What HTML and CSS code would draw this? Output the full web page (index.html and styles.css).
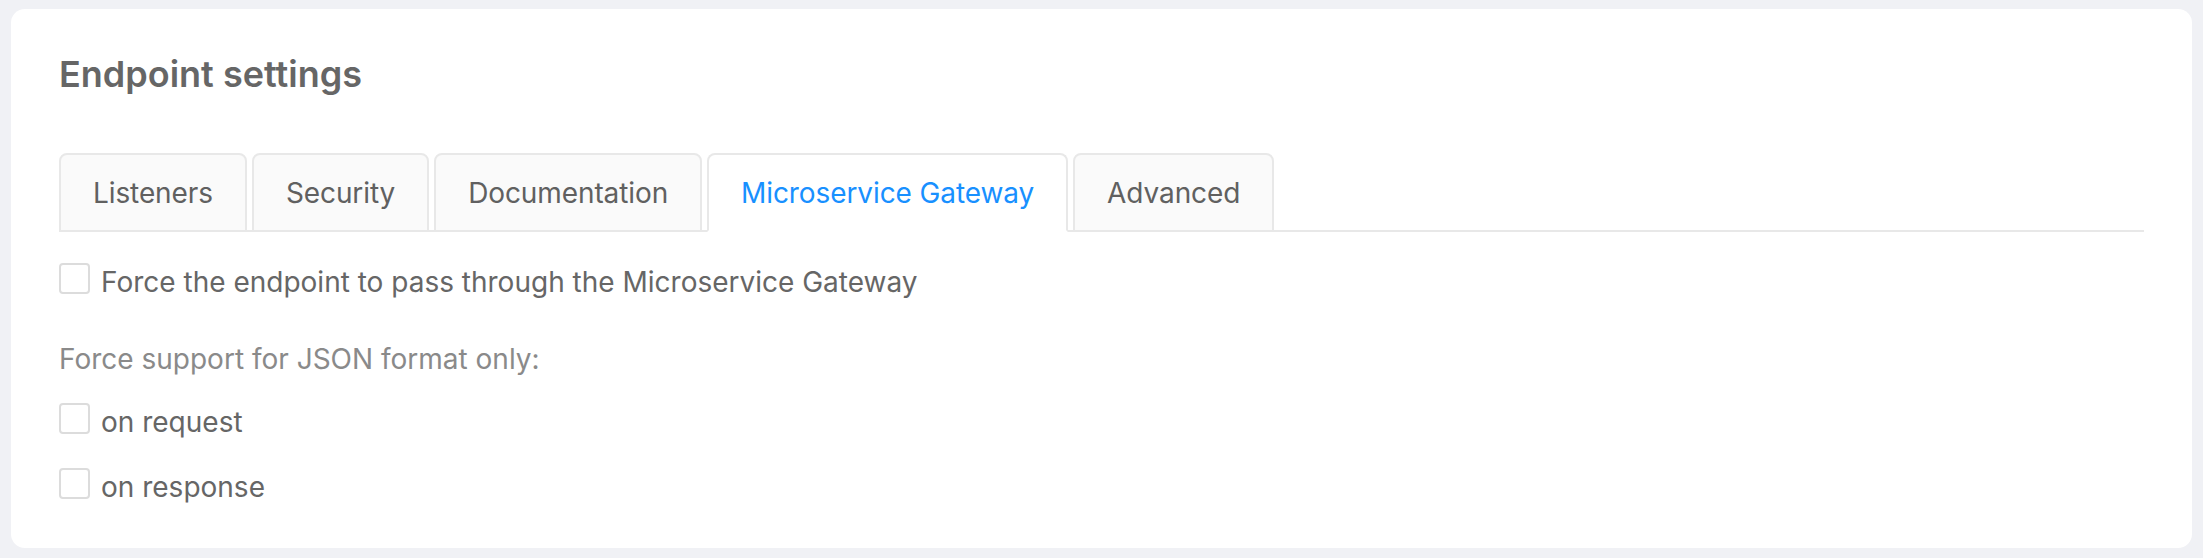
FILE: index.html
```html
<!DOCTYPE html>
<html lang="en">
<head>
<meta charset="utf-8">
<title>Endpoint settings</title>
<link rel="stylesheet" href="styles.css">
</head>
<body>
<div class="page">
  <section class="card">
    <h1 class="title">Endpoint settings</h1>
    <div class="tabs">
      <div class="tab">Listeners</div>
      <div class="tab">Security</div>
      <div class="tab">Documentation</div>
      <div class="tab tab-active">Microservice Gateway</div>
      <div class="tab">Advanced</div>
    </div>
    <div class="pane">
      <label class="check-row row-first">
        <span class="box"></span>
        <span class="check-label">Force the endpoint to pass through the Microservice Gateway</span>
      </label>
      <div class="group-label">Force support for JSON format only:</div>
      <label class="check-row row-second">
        <span class="box"></span>
        <span class="check-label">on request</span>
      </label>
      <label class="check-row row-third">
        <span class="box"></span>
        <span class="check-label">on response</span>
      </label>
    </div>
  </section>
</div>
</body>
</html>
```

FILE: styles.css
```css
* { box-sizing: border-box; }
html, body {
  margin: 0;
  padding: 0;
  background: #f0f1f5;
  font-family: Inter, "Noto Sans", "Liberation Sans", sans-serif;
}
.page {
  padding: 9px 11px 10px 11px;
}
.card {
  background: #ffffff;
  border-radius: 14px;
  padding: 44px 48px 41px 48px;
}
.title {
  margin: 0 0 58px 0;
  font-size: 36px;
  line-height: 42px;
  font-weight: 600;
  color: #666666;
}
.tabs {
  display: flex;
  gap: 5px;
  border-bottom: 2px solid #e8e8e8;
}
.tab {
  font-size: 28px;
  line-height: 34px;
  color: #606060;
  background: #fafafa;
  border: 2px solid #e8e8e8;
  border-radius: 8px 8px 0 0;
  padding: 21px 32px 20px 32px;
  margin-bottom: -2px;
  white-space: nowrap;
  letter-spacing: -0.1px;
}
.tab-active {
  background: #ffffff;
  color: #1890ff;
  border-bottom-color: #ffffff;
}
.pane {
  display: flex;
  flex-direction: column;
}
.check-row {
  display: flex;
  align-items: flex-start;
  gap: 10px;
  font-size: 28px;
  line-height: 40px;
  color: #666666;
}
.row-first { margin-top: 30px; }
.row-second { margin-top: 23px; }
.row-third { margin-top: 25px; }
.box {
  flex: 0 0 auto;
  width: 31px;
  height: 31px;
  margin-top: 1px;
  border: 2px solid #dcdcdc;
  border-radius: 4px;
  background: #ffffff;
}
.check-label {
  padding-left: 1px;
}
.group-label {
  margin-top: 37px;
  font-size: 28px;
  line-height: 40px;
  color: #8a8a8a;
}
```
